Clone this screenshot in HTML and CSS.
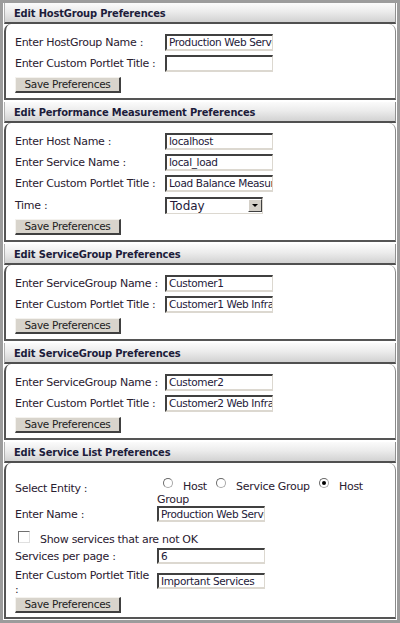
FILE: index.html
```html
<!DOCTYPE html>
<html>
<head>
<meta charset="utf-8">
<link rel="stylesheet" href="styles.css">
</head>
<body>
<div class="frame">
  <section class="panel">
    <div class="phead">Edit HostGroup Preferences</div>
    <div class="pbody">
      <div class="row"><span class="lbl">Enter HostGroup Name :</span><span class="txt">Production Web Servers</span></div>
      <div class="row"><span class="lbl">Enter Custom Portlet Title :</span><span class="txt"></span></div>
      <div class="btnrow"><span class="btn">Save Preferences</span></div>
    </div>
  </section>

  <section class="panel">
    <div class="phead">Edit Performance Measurement Preferences</div>
    <div class="pbody">
      <div class="row"><span class="lbl">Enter Host Name :</span><span class="txt">localhost</span></div>
      <div class="row"><span class="lbl">Enter Service Name :</span><span class="txt">local_load</span></div>
      <div class="row"><span class="lbl">Enter Custom Portlet Title :</span><span class="txt">Load Balance Measurement</span></div>
      <div class="row selrow"><span class="lbl">Time :</span><span class="sel"><span class="selval">Today</span><span class="arrow"></span></span></div>
      <div class="btnrow"><span class="btn">Save Preferences</span></div>
    </div>
  </section>

  <section class="panel">
    <div class="phead">Edit ServiceGroup Preferences</div>
    <div class="pbody">
      <div class="row"><span class="lbl">Enter ServiceGroup Name :</span><span class="txt">Customer1</span></div>
      <div class="row"><span class="lbl">Enter Custom Portlet Title :</span><span class="txt">Customer1 Web Infrastructure</span></div>
      <div class="btnrow"><span class="btn">Save Preferences</span></div>
    </div>
  </section>

  <section class="panel">
    <div class="phead">Edit ServiceGroup Preferences</div>
    <div class="pbody">
      <div class="row"><span class="lbl">Enter ServiceGroup Name :</span><span class="txt">Customer2</span></div>
      <div class="row"><span class="lbl">Enter Custom Portlet Title :</span><span class="txt">Customer2 Web Infrastructure</span></div>
      <div class="btnrow"><span class="btn">Save Preferences</span></div>
    </div>
  </section>

  <section class="panel last">
    <div class="phead">Edit Service List Preferences</div>
    <div class="pbody list">
      <div class="lrow entity">
        <span class="lbl2">Select Entity :</span>
        <span class="radios"><span class="radio"></span>Host <span class="radio"></span>Service Group <span class="radio on"></span>Host Group</span>
      </div>
      <div class="lrow name">
        <span class="lbl2">Enter Name :</span>
        <span class="txt small">Production Web Servers</span>
      </div>
      <div class="chkrow"><span class="chk"></span><span class="chktext">Show services that are not OK</span></div>
      <div class="lrow per">
        <span class="lbl2">Services per page :</span>
        <span class="txt small">6</span>
      </div>
      <div class="lrow title">
        <span class="lbl2">Enter Custom Portlet Title :</span>
        <span class="txt small">Important Services</span>
      </div>
      <div class="btnrow b5"><span class="btn">Save Preferences</span></div>
    </div>
  </section>
</div>
</body>
</html>
```
FILE: styles.css
```css
html, body {
  margin: 0;
  padding: 0;
}
body {
  font-family: "DejaVu Sans", Verdana, sans-serif;
  font-size: 11px;
  letter-spacing: -0.3px;
  color: #2a2030;
  background: #ffffff;
}
.frame {
  width: 400px;
  height: 623px;
  box-sizing: border-box;
  border: 3px solid #9c9c9c;
  background: #ffffff;
  padding: 0 1px;
  display: flex;
  flex-direction: column;
  gap: 2px;
  overflow: hidden;
}
.panel {
  display: flex;
  flex-direction: column;
  flex: none;
}
.phead {
  height: 18px;
  padding-top: 1px;
  line-height: 19px;
  padding-left: 9px;
  font-family: "DejaVu Sans Condensed", "DejaVu Sans", sans-serif;
  font-weight: bold;
  letter-spacing: -0.15px;
  color: #1c1c3a;
  background: linear-gradient(#fbfbfb, #ececec 45%, #d2d2d2);
  border-left: 1px solid #b0b0b0;
  border-right: 1px solid #909090;
  border-bottom: 2px solid #505050;
  white-space: nowrap;
}
.pbody {
  background: #fff;
  border-left: 2px solid #555;
  border-right: 1px solid #8a8a8a;
  border-bottom: 2px solid #555;
  border-radius: 7px 7px 0 0;
  padding: 10px 0 5px 9px;
  display: flex;
  flex-direction: column;
  gap: 4px;
}
.row {
  display: flex;
  align-items: center;
  height: 17px;
}
.selrow {
  margin-top: 1px;
}
.lbl {
  width: 150px;
  flex: none;
  white-space: nowrap;
}
.txt {
  display: block;
  box-sizing: border-box;
  width: 108px;
  height: 17px;
  border-top: 2px solid #404040;
  border-left: 2px solid #404040;
  border-right: 1px solid #dcd8d0;
  border-bottom: 2px solid #dcd8d0;
  padding: 0 0 0 2px;
  line-height: 13px;
  font-size: 10.5px;
  letter-spacing: -0.35px;
  white-space: nowrap;
  overflow: hidden;
  color: #241a3a;
  background: #fff;
}
.sel {
  display: flex;
  box-sizing: border-box;
  width: 98px;
  height: 17px;
  border-top: 2px solid #404040;
  border-left: 2px solid #404040;
  border-right: 1px solid #dcd8d0;
  border-bottom: 1px solid #dcd8d0;
  font-size: 12px;
  letter-spacing: 0;
  line-height: 14px;
}
.selval {
  flex: 1;
  padding-left: 3px;
  color: #241a3a;
}
.arrow {
  width: 14px;
  height: 13px;
  box-sizing: border-box;
  background: #d4d0c8;
  border-top: 1px solid #fff;
  border-left: 1px solid #fff;
  border-right: 1px solid #404040;
  border-bottom: 1px solid #404040;
  position: relative;
}
.arrow::after {
  content: "";
  position: absolute;
  left: 3px;
  top: 4px;
  border-left: 3px solid transparent;
  border-right: 3px solid transparent;
  border-top: 3px solid #000;
}
.btnrow {
  display: flex;
  margin-top: 1px;
}
.btn {
  display: block;
  box-sizing: border-box;
  width: 106px;
  height: 16px;
  line-height: 13px;
  font-size: 10.5px;
  letter-spacing: -0.3px;
  text-align: center;
  background: #d8d4cc;
  border-top: 1px solid #f4f2ee;
  border-left: 1px solid #f4f2ee;
  border-right: 2px solid #404040;
  border-bottom: 2px solid #404040;
  color: #222;
  white-space: nowrap;
}
.pbody.list {
  gap: 0;
  padding-top: 15px;
  padding-bottom: 4px;
}
.lrow {
  display: flex;
}
.lbl2 {
  width: 140px;
  padding-right: 2px;
  flex: none;
}
.txt.small {
  height: 16px;
  line-height: 12px;
}
.entity {
  height: 26px;
  align-items: flex-start;
}
.entity .lbl2 {
  margin-top: 4px;
  line-height: 13px;
}
.radios {
  width: 226px;
  line-height: 13px;
}
.radio {
  display: inline-block;
  width: 10px;
  height: 10px;
  border-radius: 50%;
  box-sizing: border-box;
  border: 1px solid #a8a8a8;
  border-top-color: #6a6a6a;
  border-left-color: #6a6a6a;
  background: #fff;
  margin-left: 6px;
  margin-right: 10px;
  vertical-align: 2px;
  position: relative;
}
.radio.on::after {
  content: "";
  position: absolute;
  left: 2px;
  top: 2px;
  width: 4px;
  height: 4px;
  border-radius: 50%;
  background: #000;
}
.name {
  height: 20px;
  align-items: center;
}
.chkrow {
  display: flex;
  align-items: flex-start;
  height: 22px;
}
.chk {
  display: block;
  box-sizing: border-box;
  width: 12px;
  height: 12px;
  margin-left: 3px;
  margin-right: 10px;
  margin-top: 7px;
  border-top: 1px solid #707070;
  border-left: 1px solid #707070;
  border-right: 1px solid #e0e0e0;
  border-bottom: 1px solid #e0e0e0;
  background: #fff;
}
.chktext {
  margin-top: 9px;
  line-height: 13px;
}
.per {
  height: 20px;
  align-items: center;
}
.title {
  height: 30px;
  align-items: flex-start;
}
.title .lbl2 {
  line-height: 14px;
  margin-top: 3px;
}
.title .txt {
  margin-top: 7px;
}
.btnrow.b5 {
  margin-top: 1px;
}
```
